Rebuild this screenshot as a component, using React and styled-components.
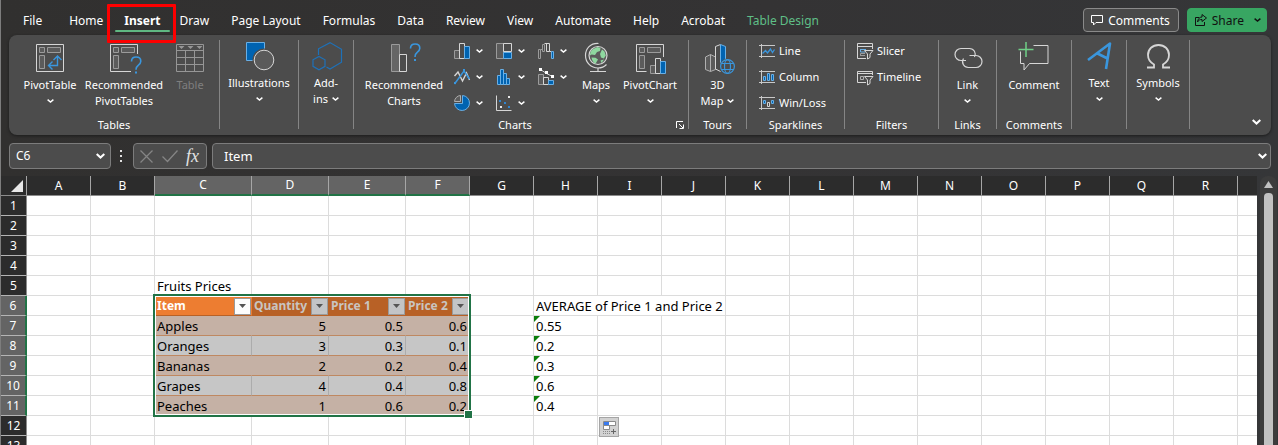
import React from "react";
import styled, { createGlobalStyle, css } from "styled-components";

const GlobalStyle = createGlobalStyle`
  * { box-sizing: border-box; }
  body { margin: 0; background: #323131; }
  body, button, input, table { font-family: "Noto Sans", "Open Sans", sans-serif; }
  button { border: 0; background: none; padding: 0; margin: 0; color: inherit; cursor: pointer; }
  svg { display: block; overflow: visible; flex: none; }
`;

const LINE = "#dcdcdc";
const BLUE = "#3a96dd";
const GREEN = "#217346";

const Window = styled.div`
  display: flex;
  flex-direction: column;
  height: 100vh;
  overflow: hidden;
  color: #fff;
  border-left: 1px solid #7d7d7d;
  background: linear-gradient(90deg, #31302f, #343334 60%, #353638);
`;

/* ---------- tab bar ---------- */
const TabBar = styled.header`
  display: flex;
  align-items: center;
  flex: none;
  height: 35px;
  padding: 5px 11px 0 22px;
  font-size: 12px;
  line-height: 16px;
`;
const Tabs = styled.nav`
  display: flex;
  gap: 22px;
  flex: 1;
  padding-top: 2px;
`;
const Tab = styled.a`
  position: relative;
  color: ${(p) => (p.$accent ? "#5fbf87" : "#fff")};
  font-weight: ${(p) => (p.$active ? 700 : 400)};
  text-decoration: none;
  white-space: nowrap;
  &:first-child { margin-right: 5px; }
  ${(p) =>
    p.$active &&
    css`
      margin: 0 -3px 0 -1px;
      &::after {
        content: "";
        position: absolute;
        left: -9px;
        right: -9px;
        bottom: -3px;
        height: 2px;
        border-radius: 1px;
        background: #5fb882;
      }
    `}
`;
const Highlight = styled.span`
  position: absolute;
  z-index: 2;
  inset: -9px -15px -14px -17px;
  border: 3px solid #fe0000;
  border-radius: 1px;
`;
const BarButton = styled.button`
  display: flex;
  align-items: center;
  gap: 5px;
  height: 24px;
  margin-left: 8px;
  padding: 0 ${(p) => (p.$primary ? 5 : 8)}px 0 7px;
  border: 1px solid ${(p) => (p.$primary ? "#38a662" : "#8a8a8a")};
  border-radius: 4px;
  background: ${(p) => (p.$primary ? "#38a662" : "#494949")};
  color: ${(p) => (p.$primary ? "#111" : "#fff")};
  font-size: 12px;
  line-height: 16px;
  span { padding-top: 2px; }
  span + svg { margin-left: 5px; }
`;

/* ---------- ribbon ---------- */
const Ribbon = styled.section`
  display: flex;
  flex: none;
  min-height: 100px;
  margin: 0 7px 0 8px;
  border-radius: 8px;
  background: #4c4c4c;
  box-shadow: 0 1px 3px #1c1c1c;
  font-size: 11px;
  line-height: 16px;
`;
const Group = styled.div`
  display: flex;
  flex-direction: column;
  justify-content: space-between;
  flex: 0 0 ${(p) => p.$w}px;
  padding: 7px 0 2px;
`;
const Divider = styled.i`
  flex: none;
  width: 1px;
  margin: 5px 0 6px;
  background: #858585;
`;
const Tools = styled.div`
  display: flex;
  align-items: flex-start;
  justify-content: ${(p) => (p.$start ? "flex-start" : "center")};
  padding-left: ${(p) => p.$start || 0}px;
`;
const Caption = styled.div`
  display: flex;
  align-items: center;
  text-align: center;
  span { flex: 1; }
  button { margin: 0 4px 0 0; }
`;
const TallButton = styled.button`
  display: flex;
  flex-direction: column;
  align-items: center;
  width: ${(p) => p.$w}px;
  font-size: 11px;
  line-height: 16px;
  white-space: nowrap;
  color: ${(p) => (p.$off ? "#7f7f7f" : "#fff")};
  > svg:first-child { margin-bottom: ${(p) => (p.$tight ? 1 : 3)}px; }
`;
const Line = styled.span`
  display: flex;
  align-items: center;
  justify-content: center;
  gap: 4px;
  height: 16px;
`;
const ChartGrid = styled.div`
  display: grid;
  grid-template-columns: repeat(3, 42px);
  grid-auto-rows: 26px;
  margin: -4px 0 0 4px;
`;
const SmallButton = styled.button`
  display: flex;
  align-items: center;
  gap: 6px;
  padding-left: 2px;
`;
const List = styled.div`
  display: flex;
  flex-direction: column;
  margin-top: -4px;
`;
const ListButton = styled.button`
  display: flex;
  align-items: center;
  gap: 4px;
  height: 26px;
  font-size: 11px;
  line-height: 16px;
  white-space: nowrap;
`;
const Collapse = styled.button`
  align-self: flex-end;
  margin: 0 10px 10px auto;
`;

/* ---------- formula bar ---------- */
const FormulaBar = styled.div`
  display: flex;
  align-items: center;
  flex: none;
  gap: 5px;
  margin: 8px 7px 7px 8px;
`;
const Field = styled.div`
  display: flex;
  align-items: center;
  flex: ${(p) => (p.$w ? `0 0 ${p.$w}px` : 1)};
  min-width: 0;
  height: 26px;
  padding: 0 ${(p) => (p.$w ? 5 : 3)}px 0 ${(p) => (p.$w ? 6 : 11)}px;
  border: 1px solid #7c7c7c;
  border-radius: 4px;
  background: #4c4c4c;
`;
const FieldInput = styled.input`
  flex: 1;
  min-width: 0;
  padding: 0;
  border: 0;
  outline: 0;
  background: none;
  color: #fff;
  font-size: ${(p) => p.$size}px;
  line-height: 20px;
`;
const FormulaTools = styled(Field)`
  justify-content: space-between;
`;
const Fx = styled.button`
  padding-right: 2px;
  font: italic 18px/22px "Liberation Serif", serif;
  color: #e2e2e2;
`;

/* ---------- sheet ---------- */
const SheetArea = styled.main`
  display: flex;
  flex: 1;
  min-height: 0;
  overflow: hidden;
`;
const GridWrap = styled.div`
  flex: 1;
  min-width: 0;
  overflow: hidden;
`;
const Grid = styled.table`
  width: 100%;
  table-layout: fixed;
  border-collapse: separate;
  border-spacing: 0;
  background: #fff;
  color: #000;
  font-size: 13px;
  line-height: 18px;
`;
const HeadCell = styled.th`
  height: 20px;
  padding: 0;
  background: ${(p) => (p.$on ? "#646464" : "#2c2c2c")};
  color: #fff;
  font-size: 12px;
  font-weight: 400;
  line-height: 18px;
  text-align: center;
  border-right: 1px solid #a6a6a6;
  border-bottom: ${(p) => (p.$on ? `2px solid ${GREEN}` : "1px solid #8c8c8c")};
  &:last-child { border-right: 0; }
`;
const RowHead = styled(HeadCell)`
  border-right: ${(p) => (p.$on ? `2px solid ${GREEN}` : "1px solid #8c8c8c")};
  border-bottom: 1px solid #b4b4b4;
`;
const Corner = styled(HeadCell)`
  border-right-color: #a6a6a6;
  svg { margin-left: 10px; }
`;
const kinds = {
  active: css`background: #ed7d31; border-color: #ed7d31 #ed7d31 #b86126 #ed7d31;`,
  head: css`background: #b86126; border-color: #b86126;`,
  odd: css`background: #c5b1a5; border-color: #c5b1a5; border-bottom-color: #bf8861;`,
  even: css`background: #c6c6c6; border-color: #acacac; border-bottom-color: #bf8861;`,
};
const Cell = styled.td`
  position: relative;
  height: 20px;
  padding: 1px 2px 0 2px;
  border-right: 1px solid ${LINE};
  border-bottom: 1px solid ${LINE};
  white-space: nowrap;
  text-align: ${(p) => (p.$num ? "right" : "left")};
  ${(p) => kinds[p.$kind]}
  ${(p) =>
    (p.$kind === "head" || p.$kind === "active") &&
    css`
      padding-right: 0;
      color: ${p.$kind === "active" ? "#fff" : "#c9c5c1"};
      font-size: 12px;
      font-weight: 700;
    `}
  &:last-child { border-right: 0; }
`;
const HeaderContent = styled.div`
  display: flex;
  justify-content: space-between;
  align-items: center;
  height: 18px;
`;
const FilterButton = styled.button`
  display: grid;
  place-items: center;
  width: 17px;
  height: 17px;
  border: 1px solid #9a9a9a;
  background: ${(p) => (p.$lit ? "#fdfdfd" : "#c3c4c6")};
`;
const Flag = styled.i`
  position: absolute;
  left: 0;
  top: 0;
  border-top: 6px solid #0a7d0a;
  border-right: 6px solid transparent;
`;
const Selection = styled.div`
  position: absolute;
  z-index: 1;
  left: -2px;
  top: -2px;
  width: 318px;
  height: 123px;
  border: 2px solid ${GREEN};
  box-shadow: inset 0 0 0 1px #fff;
  pointer-events: none;
  &::after {
    content: "";
    position: absolute;
    right: -4px;
    bottom: -4px;
    width: 7px;
    height: 7px;
    border: 1px solid #fff;
    background: ${GREEN};
  }
`;
const FillOptions = styled.button`
  position: absolute;
  z-index: 1;
  left: 1px;
  top: 1px;
  width: 20px;
  height: 20px;
  border: 1px solid #a5a5a5;
  background: #d2d2d2;
`;
const ScrollTrack = styled.div`
  display: flex;
  flex-direction: column;
  align-items: center;
  flex: 0 0 17px;
  margin: 0 1px 0 3px;
  padding-top: 5px;
  border-radius: 8px 8px 0 0;
  background: #3c3c3c;
`;
const Thumb = styled.div`
  flex: 1;
  width: 9px;
  margin-top: 5px;
  border-radius: 4px 4px 0 0;
  background: #c1c1c1;
`;

/* ---------- icons ---------- */
const Svg = ({ w = 32, h = w, children, stroke = "#d6d6d6", sw = 1 }) => (
  <svg width={w} height={h} viewBox={`0 0 ${w} ${h}`} fill="none" stroke={stroke} strokeWidth={sw} aria-hidden="true">
    {children}
  </svg>
);
const Chevron = ({ big, color = "#fff" }) => (
  <Svg w={big ? 9 : 7} h={big ? 6 : 4} stroke={color} sw={big ? 2 : 1.4}>
    <path d={big ? "M.7 1l3.8 3.6L8.300 1" : "M.6.6l2.900 2.500L6.400.6"} />
  </Svg>
);
const PivotParts = () => (
  <path stroke="#9b9b9b" fill="#5b5b5b" d="M5.500 5.500h5v5h-5zM13.500 5.500h13v5h-13zM5.500 13.500h5v13h-5z" />
);
const PivotIcon = () => (
  <Svg>
    <path d="M2.500 2.500h27v27h-27z" />
    <PivotParts />
    <path stroke={BLUE} strokeWidth="1.400" d="M15 23.500h8.500V14.500M18.500 19.500l-4 4 4 4M19.500 18l4-4 4 4" />
  </Svg>
);
const RecPivotIcon = () => (
  <Svg>
    <path d="M29.500 12V2.500h-27v27H23" />
    <PivotParts />
    <path stroke={BLUE} strokeWidth="1.600" d="M23.500 19.500c0-2.800 1.900-4.500 4.600-4.500s4.700 1.700 4.700 4.200c0 2.200-1.300 3.200-2.700 4.300-1.400 1-2.100 1.800-2.100 4.200" />
    <path fill={BLUE} stroke="none" d="M27 29.500h2v2h-2z" />
  </Svg>
);
const TableIcon = () => (
  <Svg stroke="#969696">
    <path d="M2.500 2.500h27v27h-27zM2.500 8.500h27M2.500 15.500h27M2.500 22.500h27M11.500 8.500v21M20.500 8.500v21" />
    <path stroke="none" fill="#969696" d="M4.500 4h6l-3 3zM13.500 4h6l-3 3zM22.500 4h6l-3 3z" />
  </Svg>
);
const IllustrationsIcon = () => (
  <Svg>
    <path fill="#0063b1" stroke="#69afe5" d="M3.500.5h18v18h-18z" />
    <circle cx="21" cy="18" r="11.500" fill="#4c4c4c" stroke="none" />
    <circle cx="21" cy="18" r="9.800" fill="#5a5a5a" />
  </Svg>
);
const AddInsIcon = () => (
  <Svg stroke="#1e71b8" sw={1.2}>
    <path d="M8.500 13V6.800L20 .6l11.500 6.700v12.900L20 27l-3.500-2" />
    <path d="M9 14.500l6 3.300v6.500l-6 3.500-6-3.500v-6.500z" />
  </Svg>
);
const RecChartsIcon = () => (
  <Svg>
    <path stroke="#9b9b9b" fill="#666" d="M3.500 2.500h8v27h-8z" />
    <path fill="#4c4c4c" d="M11.500 12.500h7v17h-7z" />
    <path stroke={BLUE} strokeWidth="1.600" d="M22.500 6.500c0-2.800 1.900-4.500 4.600-4.500s4.700 1.700 4.700 4.200c0 2.200-1.300 3.200-2.700 4.300-1.400 1-2.100 1.800-2.100 4.500" />
    <path fill={BLUE} stroke="none" d="M26 17h2v2h-2z" />
  </Svg>
);
const smallCharts = [
  <>
    <path stroke="#9b9b9b" fill="#5b5b5b" d="M.5 7.500h5v8h-5z" />
    <path d="M5.500.5h5v15h-5z" />
    <path stroke="#69afe5" fill="#0063b1" d="M10.500 3.500h5v12h-5z" />
  </>,
  <>
    <path stroke="#9b9b9b" fill="#5b5b5b" d="M.5.5h7v15h-7z" />
    <path d="M7.500.5h8v8h-8z" />
    <path stroke="#69afe5" fill="#0063b1" d="M7.500 9.500h8v6h-8z" />
  </>,
  <>
    <path stroke="#9b9b9b" d="M.5 6.500h2v9h-2zM4.500 6.500h-2M4.500 8.500v-7h2v7z" />
    <path d="M6.500.5h5M8.500.5v8h3V.5M11.500 8.500h2" />
    <path stroke="#69afe5" fill="#0063b1" d="M13.500 8.500h2v7h-2z" />
  </>,
  <>
    <path strokeWidth="1.400" d="M.5 7l3.500-4 4.500 9 4-8 3 7" />
    <path stroke={BLUE} strokeWidth="1.500" d="M.5 15L10 2l5.500 8" />
    <path stroke="none" fill={BLUE} d="M0 13h2v2H0zM9 0h2v3H9z" />
  </>,
  <path stroke="#69afe5" fill="#0063b1" d="M1.500 15.500v-9h3v9zM4.500 15.500V.5h3v15zM7.500 15.500v-11h3v11zM10.500 15.500v-6h3v6z" />,
  <>
    <path stroke="#9b9b9b" fill="#5b5b5b" d="M.5 5.500h5v10h-5z" />
    <path d="M5.500 8.500h5v7h-5zM2.500.5l6 4 6 3" />
    <path stroke="none" fill="#fff" d="M1-1h3v3H1zM7 2h3v3H7zM13 6h3v3h-3z" />
    <path stroke="#69afe5" fill="#0063b1" d="M10.500 11.500h5v4h-5z" />
  </>,
  <>
    <path stroke="#69afe5" fill="#0063b1" d="M8.500.5a7.500 7.500 0 1 1-8 8h8z" />
    <path stroke="#b0b0b0" fill="#5b5b5b" d="M.5 6.500a6.500 6.500 0 0 1 6-6v6z" />
  </>,
  <>
    <path d="M.5.5v15h15" />
    <path stroke="none" fill="#e8e8e8" d="M12 1h2v2h-2zM4 11h2v2H4z" />
    <path stroke="none" fill="#2f86d1" d="M3 5h2v2H3zM8 7h2v2H8zM12 11h2v2h-2z" />
  </>,
];
const chartNames = ["Column chart", "Hierarchy chart", "Waterfall chart", "Line chart", "Statistic chart", "Combo chart", "Pie chart", "Scatter chart"];
const GlobeIcon = () => (
  <Svg sw={1.2}>
    <circle cx="18" cy="13.500" r="9" fill="#5c5c5c" />
    <path fill="#8fd8a0" stroke="none" d="M13 7l4.500-2 3 1-.5 3-3 1-2 3-3.500-.5-1.500 1c-.2-2.500 1-5 3-6.500zM11.500 15.500l4 .3 2.500 1.700-2.500 4.200c-2-1-3.700-3.500-4-6.200zM22 7.500l2.500 2 1.300 4-2 3-2.800-1-1-3.500zM20.500 18.500l3.500-1-2.500 3.500z" />
    <path d="M18.500 1.500C10.500 1 5.500 6.500 5.500 13.500c0 7 5.500 12.500 12.500 12.500 3.500 0 6.200-1 8.500-3.500M18 26v3.500M10 29.500h16" />
  </Svg>
);
const PivotChartIcon = () => (
  <Svg>
    <path d="M29.500 15V2.500h-27v27h10" />
    <PivotParts />
    <path stroke="#9b9b9b" fill="#5b5b5b" d="M16.500 23.500h5v8h-5z" />
    <path fill="#4c4c4c" d="M21.500 16.500h5v15h-5z" />
    <path stroke="#69afe5" fill="#0063b1" d="M26.500 19.500h5v12h-5z" />
  </Svg>
);
const MapIcon = () => (
  <Svg>
    <path fill="#5b5b5b" stroke="#b0b0b0" d="M3.500 15l5-2.500 5 2.500v12.500l-5 2-5-2zM8.500 12.500v17" />
    <path d="M18.500 2.500l-5 2V27l5 2.500" />
    <path stroke="#69afe5" fill="#0063b1" d="M18.500 2.500l5 2v17l-5 2z" />
    <circle cx="25.500" cy="24.500" r="8" fill="#4c4c4c" stroke="none" />
    <g stroke={BLUE} strokeWidth="1.200">
      <circle cx="25.500" cy="24.500" r="6.900" />
      <ellipse cx="25.500" cy="24.500" rx="3" ry="6.900" />
      <path d="M19.500 21.500h12M19.500 27.500h12" />
    </g>
  </Svg>
);
const SparkIcon = ({ kind }) => (
  <Svg w={16}>
    <path d="M2.500 1v14M0 2.500h16M0 13.500h16" stroke="#c9c9c9" />
    {kind === "Line" && <path stroke={BLUE} strokeWidth="1.300" d="M3.500 10.500l3-3 2 2.500 3-4 2 3.500 2-3" />}
    {kind === "Column" && <path stroke="#69afe5" fill="#0063b1" d="M4.500 7.500h2v4h-2zM8.500 4.500h2v7h-2zM12.500 5.500h2v6h-2z" />}
    {kind === "Win/Loss" && (
      <>
        <path stroke="#69afe5" fill="#0063b1" d="M4.500 5.500h2v3h-2zM12.500 5.500h2v3h-2z" />
        <path d="M8.500 7.500h2v4h-2z" />
      </>
    )}
  </Svg>
);
const FilterIcon = ({ slicer }) => (
  <Svg w={16}>
    <path d={slicer ? "M15.500 6V.5H.5v15H9M.5 3.500h15" : "M15.500 6V2.500H.5v11H9M.5 4.500h15"} />
    {slicer ? (
      <>
        <path stroke="#69afe5" d="M3 6.500h6M3.500 6v3H8" />
        <path stroke="#9b9b9b" d="M3 12.500h5M3.500 12v-1.500H8" />
      </>
    ) : (
      <path stroke="#b0b0b0" d="M3.500 7.500h3v3h-3z" />
    )}
    <path fill="#4c4c4c" d="M7.500 7.500h8.500l-3 3.500v3.500l-2.500 1.500v-5z" />
  </Svg>
);
const LinkIcon = () => (
  <Svg sw={1.2}>
    <path d="M14 18.500H9A5.700 5.700 0 0 1 9 6.500h8.500a5.700 5.700 0 0 1 5 8.500" />
    <path d="M17.500 13.500H24a5.800 5.800 0 0 1 0 12h-7.500a5.800 5.800 0 0 1-5-9" />
  </Svg>
);
const CommentIcon = () => (
  <Svg>
    <path d="M15.500 3.500h14.500v18H11.500l-5.500 6.500v-6.500H2.500V9.500" />
    <path stroke="#6fcf87" strokeWidth="1.500" d="M8 0v15M.5 7.500h15" />
  </Svg>
);
const TextIcon = () => (
  <Svg stroke={BLUE} sw={2.6}>
    <path strokeLinejoin="round" d="M5 18L27 1.500l-4 25.500M14.500 11.500l10 5" />
  </Svg>
);
const OmegaIcon = () => (
  <Svg sw={1.8}>
    <path d="M5 25.500h7v-3C8.500 20.500 6 17.500 6 13 6 7 10.500 3 16.500 3S27 7 27 13c0 4.500-2.500 7.500-6 9.500v3h7" />
  </Svg>
);

const Tall = ({ icon, lines, drop, inline, ...rest }) => (
  <TallButton type="button" {...rest}>
    {icon}
    {lines.map((t, i) => (
      <Line key={t}>
        {t}
        {inline && i === lines.length - 1 && <Chevron />}
      </Line>
    ))}
    {drop && <Line><Chevron /></Line>}
  </TallButton>
);

/* ---------- data ---------- */
const tabs = ["File", "Home", "Insert", "Draw", "Page Layout", "Formulas", "Data", "Review", "View", "Automate", "Help", "Acrobat", "Table Design"];
const letters = "ABCDEFGHIJKLMNOPQR".split("");
const widths = [26, 64, 64, 97, 77, 77, 64, ...Array(12).fill(64)];
const tableRows = {
  7: ["Apples", "5", "0.5", "0.6"],
  8: ["Oranges", "3", "0.3", "0.1"],
  9: ["Bananas", "2", "0.2", "0.4"],
  10: ["Grapes", "4", "0.4", "0.8"],
  11: ["Peaches", "1", "0.6", "0.2"],
};
const headers = { C: "Item", D: "Quantity", E: "Price 1", F: "Price 2" };
const averages = { 7: "0.55", 8: "0.2", 9: "0.3", 10: "0.6", 11: "0.4" };

function SheetCell({ col, row }) {
  const t = "CDEF".indexOf(col);
  if (row === 6 && t >= 0) {
    return (
      <Cell $kind={t === 0 ? "active" : "head"}>
        <HeaderContent>
          {headers[col]}
          <FilterButton type="button" $lit={t === 0} aria-label={`Filter ${headers[col]}`}>
            <Svg w={7} h={4} stroke="none"><path fill="#555" d="M0 0h7L3.500 4z" /></Svg>
          </FilterButton>
        </HeaderContent>
        {t === 0 && <Selection />}
      </Cell>
    );
  }
  if (t >= 0 && tableRows[row]) {
    return <Cell $kind={row % 2 ? "odd" : "even"} $num={t > 0}>{tableRows[row][t]}</Cell>;
  }
  if (row === 5 && col === "C") return <Cell>Fruits Prices</Cell>;
  if (row === 6 && col === "H") return <Cell colSpan={3}>AVERAGE of Price 1 and Price 2</Cell>;
  if (row === 6 && (col === "I" || col === "J")) return null;
  if (col === "H" && averages[row]) return <Cell><Flag />{averages[row]}</Cell>;
  if (col === "I" && row === 12) {
    return (
      <Cell>
        <FillOptions type="button" aria-label="Auto fill options">
          <Svg w={18} stroke="#8a8a8a">
            <path fill="#fff" d="M3.500 3.500h12v4h-12zM3.500 7.500h6v4h-6z" />
            <path fill="#3a7bf0" stroke="none" d="M4 4h5v3H4z" />
            <path d="M11 13.500h5M13.500 11v5" stroke="#666" />
            <path strokeDasharray="1 1" d="M3 13.500h7M3 15.500h7" />
          </Svg>
        </FillOptions>
      </Cell>
    );
  }
  return <Cell />;
}

export default function App() {
  return (
    <Window>
      <GlobalStyle />
      <TabBar>
        <Tabs>
          {tabs.map((t) => (
            <Tab key={t} href="#" $active={t === "Insert"} $accent={t === "Table Design"}>
              {t}
              {t === "Insert" && <Highlight />}
            </Tab>
          ))}
        </Tabs>
        <BarButton type="button">
          <Svg w={12} stroke="#fff"><path d="M.5 1.500h11v7H5l-2.500 2.500V8.500h-2z" /></Svg>
          <span>Comments</span>
        </BarButton>
        <BarButton type="button" $primary>
          <Svg w={12} stroke="#111"><path d="M4 3.500H.5v8h9V8M7 .5l4.500 3.500L7 7.500V5.500c-2 0-3.500.5-4.500 2.500.3-3 2-5 4.500-5z" /></Svg>
          <span>Share</span>
          <Chevron color="#111" />
        </BarButton>
      </TabBar>

      <Ribbon>
        <Group $w={210}>
          <Tools $start={11}>
            <Tall $w={60} icon={<PivotIcon />} lines={["PivotTable"]} drop />
            <Tall $w={88} icon={<RecPivotIcon />} lines={["Recommended", "PivotTables"]} />
            <Tall $w={44} $off disabled icon={<TableIcon />} lines={["Table"]} />
          </Tools>
          <Caption><span>Tables</span></Caption>
        </Group>
        <Divider />
        <Group $w={78}>
          <Tools><Tall $w={72} $tight icon={<IllustrationsIcon />} lines={["Illustrations"]} drop /></Tools>
        </Group>
        <Divider />
        <Group $w={54}>
          <Tools><Tall $w={44} $tight icon={<AddInsIcon />} lines={["Add-", "ins"]} inline /></Tools>
        </Group>
        <Divider />
        <Group $w={334}>
          <Tools $start={6}>
            <Tall $w={88} icon={<RecChartsIcon />} lines={["Recommended", "Charts"]} />
            <ChartGrid>
              {smallCharts.map((c, i) => (
                <SmallButton type="button" key={i} aria-label={chartNames[i]}>
                  <Svg w={16}>{c}</Svg>
                  <Chevron />
                </SmallButton>
              ))}
            </ChartGrid>
            <Tall $w={36} icon={<GlobeIcon />} lines={["Maps"]} drop />
            <Tall $w={72} icon={<PivotChartIcon />} lines={["PivotChart"]} drop />
          </Tools>
          <Caption>
            <span>Charts</span>
            <button type="button" aria-label="Chart options">
              <Svg w={8}><path d="M.5 7V.5H7M3 3l4 4M7.500 3.500v4h-4" stroke="#fff" /></Svg>
            </button>
          </Caption>
        </Group>
        <Divider />
        <Group $w={57}>
          <Tools><Tall $w={44} icon={<MapIcon />} lines={["3D", "Map"]} inline /></Tools>
          <Caption><span>Tours</span></Caption>
        </Group>
        <Divider />
        <Group $w={97}>
          <Tools $start={12}>
            <List>
              {["Line", "Column", "Win/Loss"].map((k) => (
                <ListButton type="button" key={k}><SparkIcon kind={k} />{k}</ListButton>
              ))}
            </List>
          </Tools>
          <Caption><span>Sparklines</span></Caption>
        </Group>
        <Divider />
        <Group $w={93}>
          <Tools $start={12}>
            <List>
              <ListButton type="button"><FilterIcon slicer />Slicer</ListButton>
              <ListButton type="button"><FilterIcon />Timeline</ListButton>
            </List>
          </Tools>
          <Caption><span>Filters</span></Caption>
        </Group>
        <Divider />
        <Group $w={57}>
          <Tools><Tall $w={44} icon={<LinkIcon />} lines={["Link"]} drop /></Tools>
          <Caption><span>Links</span></Caption>
        </Group>
        <Divider />
        <Group $w={74}>
          <Tools><Tall $w={60} icon={<CommentIcon />} lines={["Comment"]} /></Tools>
          <Caption><span>Comments</span></Caption>
        </Group>
        <Divider />
        <Group $w={54}>
          <Tools><Tall $w={44} $tight icon={<TextIcon />} lines={["Text"]} drop /></Tools>
        </Group>
        <Divider />
        <Group $w={62}>
          <Tools><Tall $w={60} $tight icon={<OmegaIcon />} lines={["Symbols"]} drop /></Tools>
        </Group>
        <Divider />
        <Collapse type="button" aria-label="Collapse ribbon"><Chevron big /></Collapse>
      </Ribbon>

      <FormulaBar>
        <Field $w={102}>
          <FieldInput $size={12} aria-label="Name box" defaultValue="C6" />
          <button type="button" aria-label="Named ranges"><Chevron big /></button>
        </Field>
        <Svg w={12} stroke="none"><path fill="#e0e0e0" d="M4 0h2v2H4zM4 5h2v2H4zM4 10h2v2H4z" /></Svg>
        <FormulaTools $w={74}>
          <button type="button" aria-label="Cancel"><Svg w={13} stroke="#858585" sw={1.3}><path d="M.5.5l12 12M12.500.5l-12 12" /></Svg></button>
          <button type="button" aria-label="Enter"><Svg w={16} h={12} stroke="#858585" sw={1.3}><path d="M.5 6.500l5 5L15.500.5" /></Svg></button>
          <Fx type="button" aria-label="Insert function">fx</Fx>
        </FormulaTools>
        <Field>
          <FieldInput $size={13} aria-label="Formula" defaultValue="Item" />
          <button type="button" aria-label="Expand formula bar"><Chevron big /></button>
        </Field>
      </FormulaBar>

      <SheetArea>
        <GridWrap>
          <Grid>
            <colgroup>
              {widths.map((w, i) => <col key={i} style={{ width: w }} />)}
              <col />
            </colgroup>
            <thead>
              <tr>
                <Corner aria-label="Select all"><Svg w={12} stroke="none"><path fill="#e8e8e8" d="M12 0v12H0z" /></Svg></Corner>
                {letters.map((l) => <HeadCell key={l} $on={"CDEF".includes(l)}>{l}</HeadCell>)}
                <HeadCell />
              </tr>
            </thead>
            <tbody>
              {Array.from({ length: 13 }, (_, i) => i + 1).map((r) => (
                <tr key={r}>
                  <RowHead scope="row" $on={r >= 6 && r <= 11}>{r}</RowHead>
                  {letters.map((l) => <SheetCell key={l} col={l} row={r} />)}
                  <Cell />
                </tr>
              ))}
            </tbody>
          </Grid>
        </GridWrap>
        <ScrollTrack>
          <Svg w={9} h={7} stroke="none"><path fill="#c1c1c1" d="M4.500 0L9 7H0z" /></Svg>
          <Thumb />
        </ScrollTrack>
      </SheetArea>
    </Window>
  );
}
